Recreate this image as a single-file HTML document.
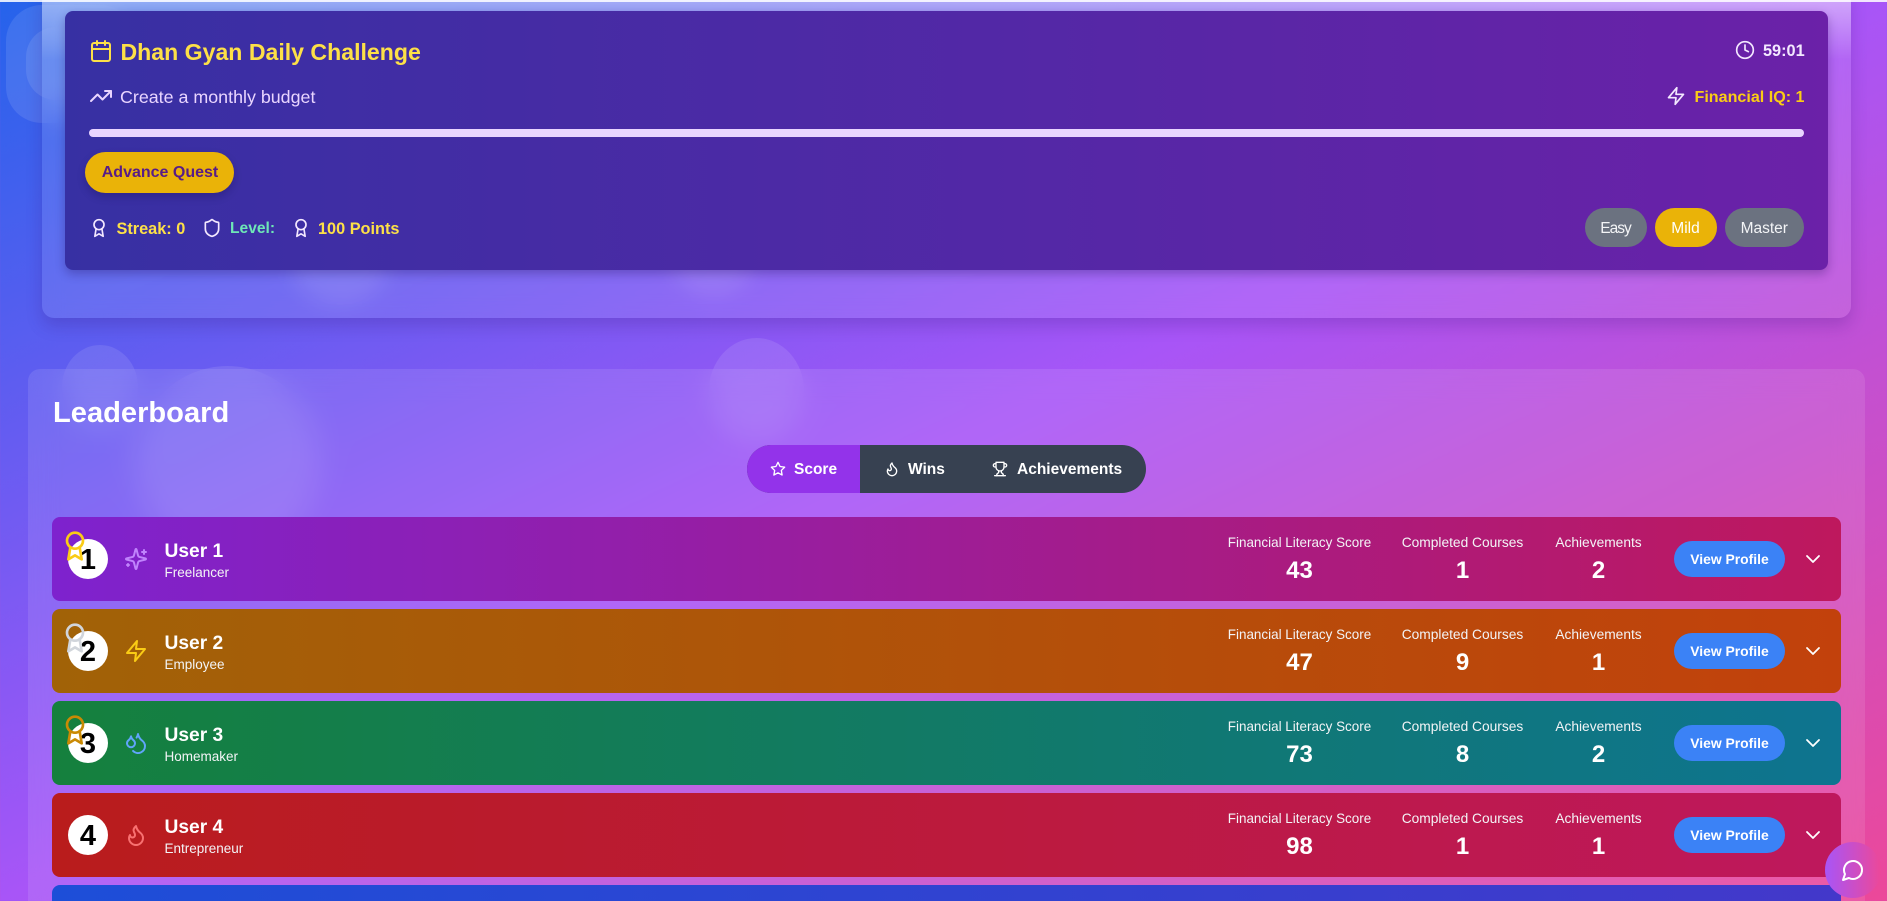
<!DOCTYPE html>
<html lang="en">
<head>
<meta charset="utf-8">
<title>Dhan Gyan Leaderboard</title>
<style>
*{box-sizing:border-box;margin:0;padding:0}
html,body{width:1887px;height:901px;overflow:hidden}
body{position:relative;font-family:"Liberation Sans",Arial,sans-serif;color:#fff;background:linear-gradient(to bottom right,#2563eb 0%,#a855f7 50%,#ec4899 100%)}
.a{position:absolute;white-space:nowrap}
.bub{position:absolute;background:rgba(255,255,255,.1)}
.top-line{position:absolute;left:0;top:0;width:1887px;height:2px;background:rgba(255,255,255,.85)}
.outer{position:absolute;left:42px;top:-10px;width:1809px;height:328px;border-radius:12px;background:rgba(255,255,255,.1);backdrop-filter:blur(10px);box-shadow:0 8px 16px rgba(60,20,120,.22)}
.glow{position:absolute;left:42px;top:0;width:1809px;height:60px;background:linear-gradient(to bottom,rgba(255,255,255,.42),rgba(255,255,255,0))}
.inner{position:absolute;left:65px;top:11px;width:1763px;height:259px;border-radius:8px;background:linear-gradient(to right,#3730a3,#6b21a8);box-shadow:0 4px 10px rgba(30,10,80,.3)}
.lb{position:absolute;left:28px;top:369px;width:1837px;height:560px;border-radius:12px;background:rgba(255,255,255,.1);backdrop-filter:blur(14px)}
.row{position:absolute;left:52px;width:1789px;height:84px;border-radius:8px}
.row .rk{position:absolute;left:16px;top:22px;width:40px;height:40px;border-radius:50%;background:#fff;color:#000;font-weight:700;font-size:29px;line-height:42px;text-align:center}
.row .medal{position:absolute;left:7px;top:13px;width:32px;height:32px;fill:none;stroke-width:2;stroke-linecap:round;stroke-linejoin:round}
.row .ty{position:absolute;left:72px;top:30px;width:24px;height:24px}
.row .nm{position:absolute;left:112.5px;top:23px;font-size:19.2px;line-height:24px;font-weight:700;white-space:nowrap}
.row .sb{position:absolute;left:112.5px;top:48px;font-size:13.5px;line-height:16px;color:#f3f4f6;white-space:nowrap}
.row .lab{position:absolute;top:18px;width:180px;font-size:13.75px;line-height:16px;text-align:center;color:#f3f4f6;white-space:nowrap}
.row .lab.f{font-size:13.45px}
.row .val{position:absolute;top:40px;width:180px;font-size:24px;line-height:28px;font-weight:700;text-align:center}
.row .vp{position:absolute;left:1622px;top:24px;width:111px;height:36px;border-radius:18px;background:#3b82f6;font-size:13.9px;font-weight:700;line-height:37px;text-align:center;white-space:nowrap}
.row .ch{position:absolute;left:1749px;top:30px;width:24px;height:24px;stroke-width:1.8}
svg.i{fill:none;stroke:currentColor;stroke-width:2;stroke-linecap:round;stroke-linejoin:round;position:absolute}
.pill{position:absolute;top:208px;height:39px;border-radius:20px;font-size:15.5px;line-height:41px;text-align:center;background:#6b7280;color:#f3f4f6}
.tabtxt{position:absolute;top:446px;height:48px;line-height:48px;font-size:15.5px;font-weight:700;white-space:nowrap}
</style>
</head>
<body>
<svg width="0" height="0" style="position:absolute">
<defs>
<symbol id="award" viewBox="0 0 24 24"><circle cx="12" cy="8" r="6"/><path d="M15.477 12.89 17 22l-5-3-5 3 1.523-9.11"/></symbol>
<symbol id="zap" viewBox="0 0 24 24"><path d="M13 2 3 14h9l-1 8 10-12h-9l1-8z"/></symbol>
<symbol id="flame" viewBox="0 0 24 24"><path d="M8.5 14.5A2.5 2.5 0 0 0 11 12c0-1.38-.5-2-1-3-1.072-2.143-.224-4.054 2-6 .5 2.5 2 4.9 4 6.5 2 1.6 3 3.5 3 5.5a7 7 0 1 1-14 0c0-1.153.433-2.294 1-3a2.5 2.5 0 0 0 2.5 2.5z"/></symbol>
<symbol id="sparkles" viewBox="0 0 24 24"><path d="M9.937 15.5A2 2 0 0 0 8.5 14.063l-6.135-1.582a.5.5 0 0 1 0-.962L8.5 9.936A2 2 0 0 0 9.937 8.5l1.582-6.135a.5.5 0 0 1 .963 0L14.063 8.5A2 2 0 0 0 15.5 9.937l6.135 1.581a.5.5 0 0 1 0 .964L15.5 14.063a2 2 0 0 0-1.437 1.437l-1.582 6.135a.5.5 0 0 1-.963 0z"/><path d="M20 3v4"/><path d="M22 5h-4"/><path d="M4 17v2"/><path d="M5 18H3"/></symbol>
<symbol id="droplets" viewBox="0 0 24 24"><path d="M7 16.3c2.2 0 4-1.83 4-4.05 0-1.16-.57-2.26-1.71-3.19S7.29 6.75 7 5.3c-.29 1.45-1.14 2.84-2.29 3.76S3 11.1 3 12.25c0 2.22 1.8 4.05 4 4.05z"/><path d="M12.56 6.6A10.97 10.97 0 0 0 14 3.02c.5 2.5 2 4.9 4 6.5s3 3.5 3 5.5a6.98 6.98 0 0 1-11.91 4.97"/></symbol>
<symbol id="chev" viewBox="0 0 24 24"><path d="m6 9 6 6 6-6"/></symbol>
</defs>
</svg>

<!-- background bubbles -->
<div class="bub" style="left:6px;top:5px;width:130px;height:118px;border-radius:36px"></div>
<div class="bub" style="left:26px;top:27px;width:90px;height:73px;border-radius:30px"></div>
<div class="bub" style="left:62px;top:345px;width:76px;height:84px;border-radius:50%"></div>
<div class="bub" style="left:135px;top:366px;width:185px;height:190px;border-radius:50%"></div>
<div class="bub" style="left:709px;top:338px;width:95px;height:105px;border-radius:50%"></div>
<div class="bub" style="left:290px;top:215px;width:100px;height:90px;border-radius:50%"></div>
<div class="bub" style="left:670px;top:215px;width:85px;height:80px;border-radius:50%"></div>

<div class="outer"></div>
<div class="glow"></div>
<div class="top-line"></div>

<div class="inner"></div>
<svg class="i" style="left:89px;top:39px;color:#fde047" width="24" height="24" viewBox="0 0 24 24"><path d="M8 2v4"/><path d="M16 2v4"/><rect width="18" height="18" x="3" y="4" rx="2"/><path d="M3 10h18"/></svg>
<div class="a" style="left:120.5px;top:38px;font-size:23.1px;line-height:28px;font-weight:700;color:#fde047">Dhan Gyan Daily Challenge</div>
<svg class="i" style="left:1735px;top:40px;color:#f3e8ff" width="20" height="20" viewBox="0 0 24 24"><circle cx="12" cy="12" r="10"/><polyline points="12 6 12 12 16 14"/></svg>
<div class="a" style="left:1763px;top:41px;font-size:16.3px;line-height:20px;font-weight:700;color:#f3e8ff">59:01</div>

<svg class="i" style="left:89px;top:84px;color:#e9d5ff" width="24" height="24" viewBox="0 0 24 24"><polyline points="22 7 13.5 15.5 8.5 10.5 2 17"/><polyline points="16 7 22 7 22 13"/></svg>
<div class="a" style="left:120px;top:85.5px;font-size:17.85px;line-height:22px;color:#e9d5ff">Create a monthly budget</div>
<svg class="i" style="left:1666px;top:86px;color:#f3e8ff" width="20" height="20" viewBox="0 0 24 24"><use href="#zap"/></svg>
<div class="a" style="left:1694.5px;top:86px;font-size:16.1px;line-height:22px;font-weight:700;color:#facc15">Financial IQ: 1</div>

<div style="position:absolute;left:89px;top:129px;width:1715px;height:8px;border-radius:4px;background:#e9d5ff"></div>

<div class="a" style="left:85px;top:152px;width:149px;height:41px;border-radius:21px;background:#eab308;color:#581c87;font-size:16px;font-weight:700;line-height:41px;text-align:center;padding-left:1px;box-shadow:0 4px 8px rgba(20,10,70,.25)">Advance Quest</div>

<svg class="i" style="left:89px;top:218px;color:#f3e8ff" width="20" height="20" viewBox="0 0 24 24"><use href="#award"/></svg>
<div class="a" style="left:116.5px;top:218.5px;font-size:16.3px;line-height:20px;font-weight:700;color:#fde047">Streak: 0</div>
<svg class="i" style="left:202px;top:218px;color:#f3e8ff" width="20" height="20" viewBox="0 0 24 24"><path d="M20 13c0 5-3.5 7.5-7.66 8.95a1 1 0 0 1-.67-.01C7.5 20.5 4 18 4 13V6a1 1 0 0 1 1-1c2 0 4.5-1.2 6.24-2.72a1.17 1.17 0 0 1 1.52 0C14.51 3.81 17 5 19 5a1 1 0 0 1 1 1z"/></svg>
<div class="a" style="left:230px;top:218.5px;font-size:15.6px;line-height:20px;font-weight:700;color:#6ee7b7">Level:</div>
<svg class="i" style="left:291px;top:218px;color:#f3e8ff" width="20" height="20" viewBox="0 0 24 24"><use href="#award"/></svg>
<div class="a" style="left:318px;top:218.5px;font-size:16.3px;line-height:20px;font-weight:700;color:#fde047">100 Points</div>

<div class="pill" style="left:1584.5px;width:62px;letter-spacing:-1px">Easy</div>
<div class="pill" style="left:1654.5px;width:62px;background:#eab308;color:#fff">Mild</div>
<div class="pill" style="left:1724.5px;width:79.5px">Master</div>

<!-- leaderboard -->
<div class="lb"></div>
<div class="a" style="left:53px;top:394px;font-size:29.1px;line-height:38px;font-weight:700">Leaderboard</div>

<div style="position:absolute;left:747px;top:445px;width:399px;height:48px;border-radius:24px;overflow:hidden;background:#374151"><div style="width:113px;height:48px;background:#9333ea"></div></div>
<svg class="i" style="left:770px;top:461px" width="16" height="16" viewBox="0 0 24 24"><polygon points="12 2 15.09 8.26 22 9.27 17 14.14 18.18 21.02 12 17.77 5.82 21.02 7 14.14 2 9.27 8.91 8.26 12 2"/></svg>
<div class="tabtxt" style="left:794px">Score</div>
<svg class="i" style="left:884px;top:461px" width="16" height="16" viewBox="0 0 24 24"><use href="#flame"/></svg>
<div class="tabtxt" style="left:908px">Wins</div>
<svg class="i" style="left:992px;top:461px" width="16" height="16" viewBox="0 0 24 24"><path d="M6 9H4.5a2.5 2.5 0 0 1 0-5H6"/><path d="M18 9h1.5a2.5 2.5 0 0 0 0-5H18"/><path d="M4 22h16"/><path d="M10 14.66V17c0 .55-.47.98-.97 1.21C7.85 18.75 7 20.24 7 22"/><path d="M14 14.66V17c0 .55.47.98.97 1.21C16.15 18.75 17 20.24 17 22"/><path d="M18 2H6v7a6 6 0 0 0 12 0V2Z"/></svg>
<div class="tabtxt" style="left:1017px">Achievements</div>

<!-- row 1 -->
<div class="row" style="top:517px;background:linear-gradient(to right,#7e22ce,#be185d)">
<div class="rk">1</div>
<svg class="medal" style="stroke:#facc15" viewBox="0 0 24 24"><use href="#award"/></svg>
<svg class="i ty" style="color:#c084fc" viewBox="0 0 24 24"><use href="#sparkles"/></svg>
<div class="nm">User 1</div><div class="sb">Freelancer</div>
<div class="lab f" style="left:1157.5px">Financial Literacy Score</div><div class="val" style="left:1157.5px">43</div>
<div class="lab" style="left:1320.5px">Completed Courses</div><div class="val" style="left:1320.5px">1</div>
<div class="lab" style="left:1456.5px">Achievements</div><div class="val" style="left:1456.5px">2</div>
<div class="vp">View Profile</div>
<svg class="i ch" viewBox="0 0 24 24"><use href="#chev"/></svg>
</div>
<!-- row 2 -->
<div class="row" style="top:609px;background:linear-gradient(to right,#a16207,#c2410c)">
<div class="rk">2</div>
<svg class="medal" style="stroke:#d1d5db" viewBox="0 0 24 24"><use href="#award"/></svg>
<svg class="i ty" style="color:#facc15" viewBox="0 0 24 24"><use href="#zap"/></svg>
<div class="nm">User 2</div><div class="sb">Employee</div>
<div class="lab f" style="left:1157.5px">Financial Literacy Score</div><div class="val" style="left:1157.5px">47</div>
<div class="lab" style="left:1320.5px">Completed Courses</div><div class="val" style="left:1320.5px">9</div>
<div class="lab" style="left:1456.5px">Achievements</div><div class="val" style="left:1456.5px">1</div>
<div class="vp">View Profile</div>
<svg class="i ch" viewBox="0 0 24 24"><use href="#chev"/></svg>
</div>
<!-- row 3 -->
<div class="row" style="top:701px;background:linear-gradient(to right,#15803d,#0e7490)">
<div class="rk">3</div>
<svg class="medal" style="stroke:#ca8a04" viewBox="0 0 24 24"><use href="#award"/></svg>
<svg class="i ty" style="color:#60a5fa" viewBox="0 0 24 24"><use href="#droplets"/></svg>
<div class="nm">User 3</div><div class="sb">Homemaker</div>
<div class="lab f" style="left:1157.5px">Financial Literacy Score</div><div class="val" style="left:1157.5px">73</div>
<div class="lab" style="left:1320.5px">Completed Courses</div><div class="val" style="left:1320.5px">8</div>
<div class="lab" style="left:1456.5px">Achievements</div><div class="val" style="left:1456.5px">2</div>
<div class="vp">View Profile</div>
<svg class="i ch" viewBox="0 0 24 24"><use href="#chev"/></svg>
</div>
<!-- row 4 -->
<div class="row" style="top:793px;background:linear-gradient(to right,#b91c1c,#be185d)">
<div class="rk">4</div>
<svg class="i ty" style="color:#f87171" viewBox="0 0 24 24"><use href="#flame"/></svg>
<div class="nm">User 4</div><div class="sb">Entrepreneur</div>
<div class="lab f" style="left:1157.5px">Financial Literacy Score</div><div class="val" style="left:1157.5px">98</div>
<div class="lab" style="left:1320.5px">Completed Courses</div><div class="val" style="left:1320.5px">1</div>
<div class="lab" style="left:1456.5px">Achievements</div><div class="val" style="left:1456.5px">1</div>
<div class="vp">View Profile</div>
<svg class="i ch" viewBox="0 0 24 24"><use href="#chev"/></svg>
</div>
<!-- row 5 -->
<div class="row" style="top:885px;height:16px;border-radius:8px 8px 0 0;background:linear-gradient(to right,#1d4ed8,#4338ca)"></div>

<!-- chat -->
<div style="position:absolute;left:1825px;top:842px;width:56px;height:56px;border-radius:50%;background:linear-gradient(to right,#a855f7,#ec4899)"></div>
<svg class="i" style="left:1841px;top:858px" width="24" height="24" viewBox="0 0 24 24"><path d="M7.9 20A9 9 0 1 0 4 16.1L2 22Z"/></svg>
</body>
</html>
